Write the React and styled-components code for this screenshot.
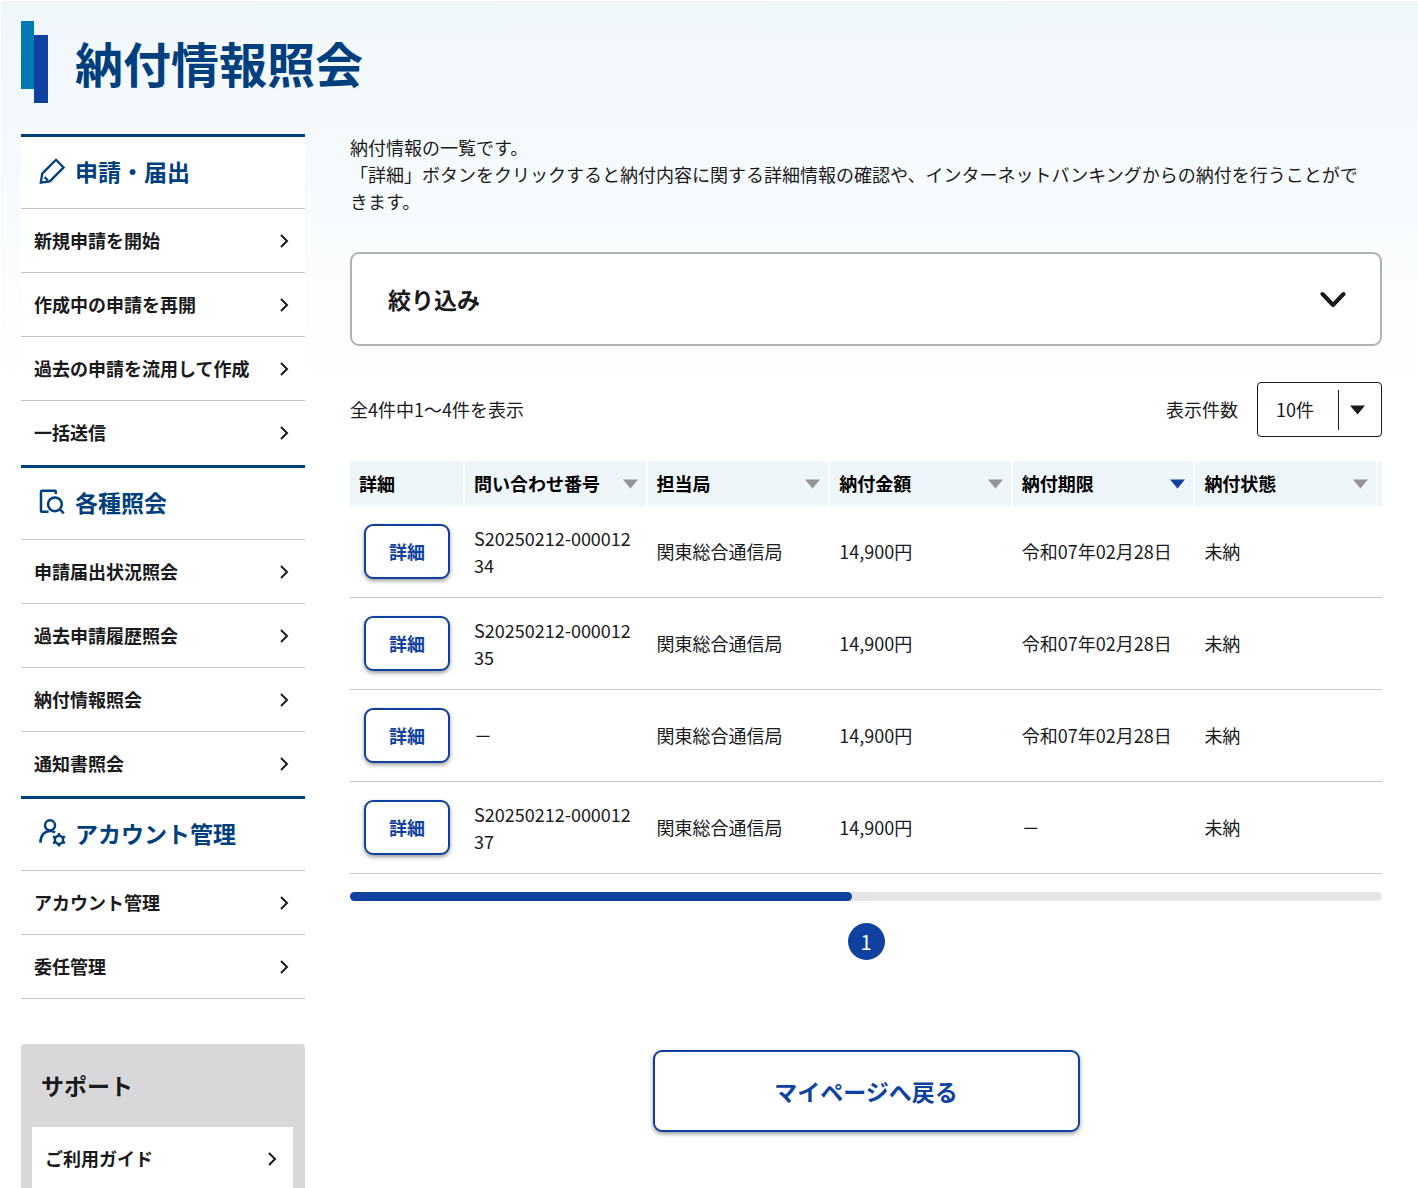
import React, { useState } from 'react';
import styled, { createGlobalStyle } from 'styled-components';

const GlobalStyle = createGlobalStyle`
  * {
    box-sizing: border-box;
  }

  body {
    margin: 0;
    background: #ffffff;
    color: #1a1a1c;
    font-family: "Noto Sans CJK JP", "Noto Sans", sans-serif;
    font-size: 18px;
    line-height: 27px;
  }

  button, select {
    font: inherit;
    color: inherit;
  }
`

const Page = styled.div`
  height: 100vh;
  overflow-y: auto;
  scrollbar-width: none;
  border-top: 1px solid #ffffff;
  border-left: 1px solid #ffffff;
  padding: 20px 36px 0 20px;
  background: linear-gradient(#f0f7fb, #ffffff 400px) no-repeat;
`

const PageHeader = styled.header`
  display: flex;
  gap: 27px;
  margin-bottom: 31px;
`

const HeaderMark = styled.div`
  display: flex;
  height: 82px;
`

const Bar = styled.span`
  width: ${props => props.$low ? '14px' : '13px'};
  height: 68px;
  align-self: ${props => props.$low ? 'flex-end' : 'flex-start'};
  background: ${props => props.$low ? '#0f41a0' : '#0079b0'};
`

const Title = styled.h1`
  margin: 0;
  color: #003f7e;
  font-size: 48px;
  font-weight: 700;
  line-height: 82px;
`

const Columns = styled.div`
  display: grid;
  grid-template-columns: 284px minmax(0, 1fr);
  gap: 45px;
`

const SideSection = styled.section`
  border-top: 3px solid #003f7e;
  background: #ffffff;
`

const SideHeading = styled.h2`
  display: flex;
  align-items: center;
  gap: 9px;
  height: 72px;
  margin: 0;
  padding: 0 17px 3px;
  border-bottom: 1px solid #c3c3c5;
  color: #003f7e;
  font-size: 23px;
  font-weight: 700;
  line-height: 32px;
`

const SideList = styled.ul`
  margin: 0;
  padding: 0;
  list-style: none;
`

const SideItem = styled.li`
  border-bottom: 1px solid #c3c3c5;

  ${SideSection}:not(:last-of-type) &:last-child {
    border-bottom-color: transparent;
  }
`

const SideLink = styled.a`
  display: flex;
  align-items: center;
  justify-content: space-between;
  height: 63px;
  padding: 0 14px 0 13px;
  color: inherit;
  font-weight: 700;
  text-decoration: none;
`

const Support = styled.aside`
  margin-top: 45px;
  padding: 0 12px 12px 11px;
  border-radius: 4px;
  background: #d8d8db;
`

const SupportTitle = styled.h2`
  margin: 0;
  padding: 0 9px;
  font-size: 23px;
  font-weight: 700;
  line-height: 83px;
`

const SupportList = styled(SideList)`
  background: #ffffff;
`

const Lead = styled.p`
  margin: 0 0 37px;
  padding-right: 12px;
`

const FilterButton = styled.button`
  display: flex;
  align-items: center;
  justify-content: space-between;
  width: 100%;
  height: 94px;
  padding: 0 34px 0 36px;
  border: 2px solid #b1b1b4;
  border-radius: 9px;
  background: #ffffff;
  font-size: 23px;
  font-weight: 700;
  line-height: 32px;
  cursor: pointer;
`

const ListBar = styled.div`
  display: flex;
  align-items: center;
  justify-content: space-between;
  margin: 36px 0 24px;
`

const CountLabel = styled.label`
  display: flex;
  align-items: center;
  gap: 19px;
`

const SelectBox = styled.span`
  position: relative;
  display: block;
`

const Select = styled.select`
  display: block;
  width: 125px;
  height: 55px;
  padding: 0 18px;
  border: 1px solid #1a1a1c;
  border-radius: 4px;
  background: #ffffff;
  appearance: none;
`

const SelectArrow = styled.span`
  position: absolute;
  top: 8px;
  right: 17px;
  display: flex;
  align-items: center;
  height: 40px;
  padding-left: 11px;
  border-left: 1px solid #1a1a1c;
  pointer-events: none;
`

const Table = styled.table`
  width: 100%;
  table-layout: fixed;
  border-collapse: separate;
  border-spacing: 0;
`

const HeadCell = styled.th`
  width: ${props => props.$width || 'auto'};
  height: 45px;
  padding: 0 ${props => props.$edge ? '0' : '8px 0 9px'};
  border-right: ${props => props.$edge ? '0' : '2px'} solid #fafdfe;
  background: #eef6fa;
  color: #000000;
  font-weight: 700;
  text-align: left;
`

const SortButton = styled.button`
  display: flex;
  align-items: center;
  justify-content: space-between;
  width: 100%;
  padding: 0;
  border: 0;
  background: none;
  font-weight: 700;
  cursor: pointer;
`

const Cell = styled.td`
  height: 92px;
  padding: 0 9px;
  border-bottom: 1px solid #c9c9cb;
  word-break: break-all;
`

const EdgeCell = styled(Cell)`
  padding: 0;
`

const DetailCell = styled(Cell)`
  padding: 0 14px;
`

const OutlineButton = styled.button`
  display: block;
  width: ${props => props.$large ? '427px' : '86px'};
  height: ${props => props.$large ? '82px' : '55px'};
  margin: ${props => props.$large ? '90px auto 0' : '0'};
  padding: 0;
  border: 2px solid #0f41a0;
  border-radius: 9px;
  background: #ffffff;
  box-shadow: 0 2px 4px rgba(0, 0, 0, 0.4);
  color: #0f41a0;
  font-size: ${props => props.$large ? '23px' : '18px'};
  font-weight: 700;
  cursor: pointer;
`

const ScrollTrack = styled.div`
  height: 9px;
  margin: 18px 0 22px;
  border-radius: 5px;
  background: #e6e6e8;
`

const ScrollThumb = styled.div`
  width: ${props => props.$size}%;
  height: 100%;
  border-radius: 5px;
  background: #0f41a0;
`

const Pager = styled.nav`
  display: flex;
  justify-content: center;
`

const PageNumber = styled.a`
  width: 37px;
  height: 37px;
  border-radius: 50%;
  background: #0f41a0;
  color: #ffffff;
  font-size: 20px;
  line-height: 37px;
  text-align: center;
  text-decoration: none;
`

const PencilIcon = () => (
  <svg width="28" height="28" viewBox="0 0 28 28" fill="none" stroke="currentColor" strokeWidth="2.3" aria-hidden="true">
    <path d="M18 2.8 L25.6 10.4 L11.8 24.3 L2.8 25.7 L4.2 16.6 Z" />
    <path d="M6.5 20 L10 23.5" />
  </svg>
)

const SearchIcon = () => (
  <svg width="28" height="28" viewBox="0 0 28 28" fill="none" stroke="currentColor" strokeWidth="2.5" aria-hidden="true">
    <path d="M17.8 6 V3.8 Q17.8 2.8 16.8 2.8 H4 Q3 2.8 3 3.8 V22.8 Q3 23.8 4 23.8 H10.5" />
    <circle cx="16.9" cy="16.3" r="6.9" />
    <path d="M21.5 21 L25.8 25.4" />
  </svg>
)

const AccountIcon = () => (
  <svg width="28" height="28" viewBox="0 0 28 28" fill="none" stroke="currentColor" strokeWidth="2.5" aria-hidden="true">
    <circle cx="12" cy="6.3" r="5" />
    <path d="M2.4 23.8 C2.4 16.5 6.5 12 12 12 C14.2 12 15.6 12.5 17 13.6" />
    <circle cx="21" cy="20.8" r="4.1" />
    <path d="M21 14 V17 M21 24.6 V27.6 M15.1 17.4 L17.7 18.9 M24.3 22.7 L26.9 24.2 M15.1 24.2 L17.7 22.7 M24.3 18.9 L26.9 17.4" />
  </svg>
)

const ChevronRight = () => (
  <svg width="14" height="14" viewBox="0 0 14 14" fill="none" stroke="currentColor" strokeWidth="2" aria-hidden="true">
    <path d="M4 1 L10 7 L4 13" />
  </svg>
)

const ChevronDown = () => (
  <svg width="26" height="20" viewBox="0 0 26 20" fill="none" stroke="currentColor" strokeWidth="4" strokeLinecap="round" strokeLinejoin="round" aria-hidden="true">
    <path d="M2.5 5 L13 16 L23.5 5" />
  </svg>
)

const Triangle = ({ color }) => (
  <svg width="15" height="10" viewBox="0 0 15 10" fill={color} aria-hidden="true">
    <path d="M0 0.5 H15 L7.5 9.5 Z" />
  </svg>
)

const sections = [
  {
    title: '申請・届出',
    Icon: PencilIcon,
    links: ['新規申請を開始', '作成中の申請を再開', '過去の申請を流用して作成', '一括送信']
  },
  {
    title: '各種照会',
    Icon: SearchIcon,
    links: ['申請届出状況照会', '過去申請履歴照会', '納付情報照会', '通知書照会']
  },
  {
    title: 'アカウント管理',
    Icon: AccountIcon,
    links: ['アカウント管理', '委任管理']
  }
]

const sortColumns = ['問い合わせ番号', '担当局', '納付金額', '納付期限', '納付状態']

const payments = [
  { id: 1, number: 'S20250212-00001234', office: '関東総合通信局', amount: '14,900円', due: '令和07年02月28日', status: '未納' },
  { id: 2, number: 'S20250212-00001235', office: '関東総合通信局', amount: '14,900円', due: '令和07年02月28日', status: '未納' },
  { id: 3, number: '－', office: '関東総合通信局', amount: '14,900円', due: '令和07年02月28日', status: '未納' },
  { id: 4, number: 'S20250212-00001237', office: '関東総合通信局', amount: '14,900円', due: '－', status: '未納' }
]

const SideMenuItem = ({ text }) => (
  <SideItem>
    <SideLink href="#">
      {text}
      <ChevronRight />
    </SideLink>
  </SideItem>
)

const Sidebar = () => (
  <div>
    <nav>
      {sections.map(({ title, Icon, links }) => (
        <SideSection key={title}>
          <SideHeading><Icon />{title}</SideHeading>
          <SideList>
            {links.map(text => <SideMenuItem key={text} text={text} />)}
          </SideList>
        </SideSection>
      ))}
    </nav>
    <Support>
      <SupportTitle>サポート</SupportTitle>
      <SupportList>
        <SideMenuItem text="ご利用ガイド" />
      </SupportList>
    </Support>
  </div>
)

const PaymentTable = () => {
  const [sortKey, setSortKey] = useState('納付期限')

  return (
    <Table>
      <thead>
        <tr>
          <HeadCell $width="115px">詳細</HeadCell>
          {sortColumns.map(name => (
            <HeadCell key={name}>
              <SortButton type="button" onClick={() => setSortKey(name)}>
                {name}
                <Triangle color={name === sortKey ? '#0f41a0' : '#949497'} />
              </SortButton>
            </HeadCell>
          ))}
          <HeadCell as="td" $width="4px" $edge />
        </tr>
      </thead>
      <tbody>
        {payments.map(payment => (
          <tr key={payment.id}>
            <DetailCell><OutlineButton type="button">詳細</OutlineButton></DetailCell>
            <Cell>{payment.number}</Cell>
            <Cell>{payment.office}</Cell>
            <Cell>{payment.amount}</Cell>
            <Cell>{payment.due}</Cell>
            <Cell>{payment.status}</Cell>
            <EdgeCell />
          </tr>
        ))}
      </tbody>
    </Table>
  )
}

const App = () => {
  return (
    <Page>
      <GlobalStyle />
      <PageHeader>
        <HeaderMark>
          <Bar />
          <Bar $low />
        </HeaderMark>
        <Title>納付情報照会</Title>
      </PageHeader>
      <Columns>
        <Sidebar />
        <main>
          <Lead>
            納付情報の一覧です。<br />
            「詳細」ボタンをクリックすると納付内容に関する詳細情報の確認や、インターネットバンキングからの納付を行うことができます。
          </Lead>
          <FilterButton type="button">
            絞り込み
            <ChevronDown />
          </FilterButton>
          <ListBar>
            <span>全4件中1～4件を表示</span>
            <CountLabel htmlFor="count">
              表示件数
              <SelectBox>
                <Select id="count">
                  <option>10件</option>
                </Select>
                <SelectArrow><Triangle color="#1a1a1c" /></SelectArrow>
              </SelectBox>
            </CountLabel>
          </ListBar>
          <PaymentTable />
          <ScrollTrack>
            <ScrollThumb $size={48.6} />
          </ScrollTrack>
          <Pager>
            <PageNumber href="#">1</PageNumber>
          </Pager>
          <OutlineButton type="button" $large>マイページへ戻る</OutlineButton>
        </main>
      </Columns>
    </Page>
  )
}

export default App;
